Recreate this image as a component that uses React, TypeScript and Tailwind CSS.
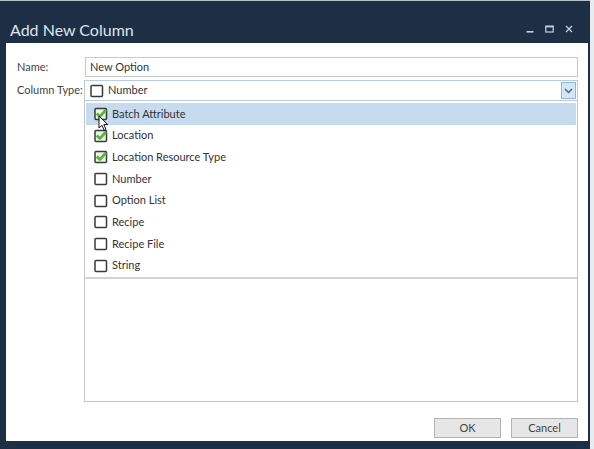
import React from "react";

const items: { label: string; checked: boolean }[] = [
  { label: "Batch Attribute", checked: true },
  { label: "Location", checked: true },
  { label: "Location Resource Type", checked: true },
  { label: "Number", checked: false },
  { label: "Option List", checked: false },
  { label: "Recipe", checked: false },
  { label: "Recipe File", checked: false },
  { label: "String", checked: false },
];

function Box({ checked }: { checked: boolean }) {
  return (
    <svg width="14" height="14" viewBox="0 0 14 14" className="shrink-0">
      <rect x="1" y="1.5" width="11.5" height="11" rx="1" fill={checked ? "#eaf5e4" : "#fff"} stroke="#3a3a3a" strokeWidth="1.5" />
      {checked && (
        <path d="M2.8 6.6 L5.8 9.6 L12 2.8" fill="none" stroke="#5cb43c" strokeWidth="2.8" strokeLinejoin="round" />
      )}
    </svg>
  );
}

export default function App() {
  return (
    <div className="w-[594px] h-[449px] bg-[#e9ecef] overflow-hidden" style={{ fontFamily: "Lato, 'Noto Sans', sans-serif" }}>
      <div className="w-[590px] h-[449px] bg-[#1c2f45] border-t border-[#b9c0c8] flex flex-col pl-[6px] pr-[2px] pb-[8px]">
        {/* title bar */}
        <div className="h-[44px] flex items-end justify-between pb-[5px]">
          <div className="pl-[4px] text-[16px] text-[#dfe4ea] leading-none">Add New Column</div>
          <div className="flex items-center gap-[11px] pr-[15px] pb-[5px]">
            <svg width="8" height="8" viewBox="0 0 8 8"><rect x="0.5" y="6" width="7" height="1.6" fill="#c7d0da" /></svg>
            <svg width="9" height="8" viewBox="0 0 9 8"><rect x="0.8" y="1.2" width="7.4" height="5.8" fill="none" stroke="#c7d0da" strokeWidth="1.2" /><rect x="0.5" y="0.8" width="8" height="1.6" fill="#c7d0da" /></svg>
            <svg width="8" height="8" viewBox="0 0 8 8"><path d="M1 1 L7 7 M7 1 L1 7" stroke="#c7d0da" strokeWidth="1.3" /></svg>
          </div>
        </div>
        {/* content */}
        <div className="flex-1 bg-white flex flex-col pl-[11px] pr-[10px] pt-[14px] pb-[3px] text-[11px] text-[#333]">
          <div className="flex items-center h-[20px]">
            <div className="w-[68px] text-[#444] whitespace-nowrap">Name:</div>
            <div className="flex-1 h-[20px] border border-[#c9c9c9] flex items-center pl-[4px] text-[#333]">New Option</div>
          </div>
          <div className="flex items-center h-[21px] mt-[3px]">
            <div className="w-[67px] text-[#444] whitespace-nowrap">Column Type:</div>
            <div className="flex-1 h-[21px] border border-[#b7cde3] flex items-center pl-[5px] pr-[1px]">
              <Box checked={false} />
              <span className="ml-[4px]">Number</span>
              <div className="ml-auto w-[15px] h-[17px] bg-[#d3e5f8] border border-[#97b7d8] flex items-center justify-center">
                <svg width="9" height="6" viewBox="0 0 9 6"><path d="M1 1 L4.5 4.5 L8 1" fill="none" stroke="#4c6480" strokeWidth="1.5" /></svg>
              </div>
            </div>
          </div>
          <div className="ml-[67px] h-[301px] border border-[#c5c5c5] border-t-0 flex flex-col">
            <div className="border-b-2 border-[#d3d3d3] pt-[2px] relative">
              {items.map((it, i) => (
                <div
                  key={it.label}
                  className={`h-[21.7px] flex items-center pl-[8px] mx-[1px] ${i === 0 ? "bg-[#c6dbef]" : ""}`}
                >
                  <Box checked={it.checked} />
                  <span className="ml-[4px]">{it.label}</span>
                </div>
              ))}
              <svg className="absolute left-[13px] top-[14px]" width="11" height="17" viewBox="0 0 11 17">
                <path d="M1 1 L1 13 L4 10.3 L6.2 15.3 L8 14.5 L5.9 9.6 L9.8 9.6 Z" fill="#fff" stroke="#111" strokeWidth="1" strokeLinejoin="round" />
              </svg>
            </div>
          </div>
          <div className="flex justify-end gap-[10px] mt-[16px]">
            <button className="w-[67px] h-[20px] bg-[#e6e6e6] border border-[#b3b3b3] text-[11px] text-[#444]">OK</button>
            <button className="w-[67px] h-[20px] bg-[#e6e6e6] border border-[#b3b3b3] text-[11px] text-[#444]">Cancel</button>
          </div>
        </div>
      </div>
    </div>
  );
}
